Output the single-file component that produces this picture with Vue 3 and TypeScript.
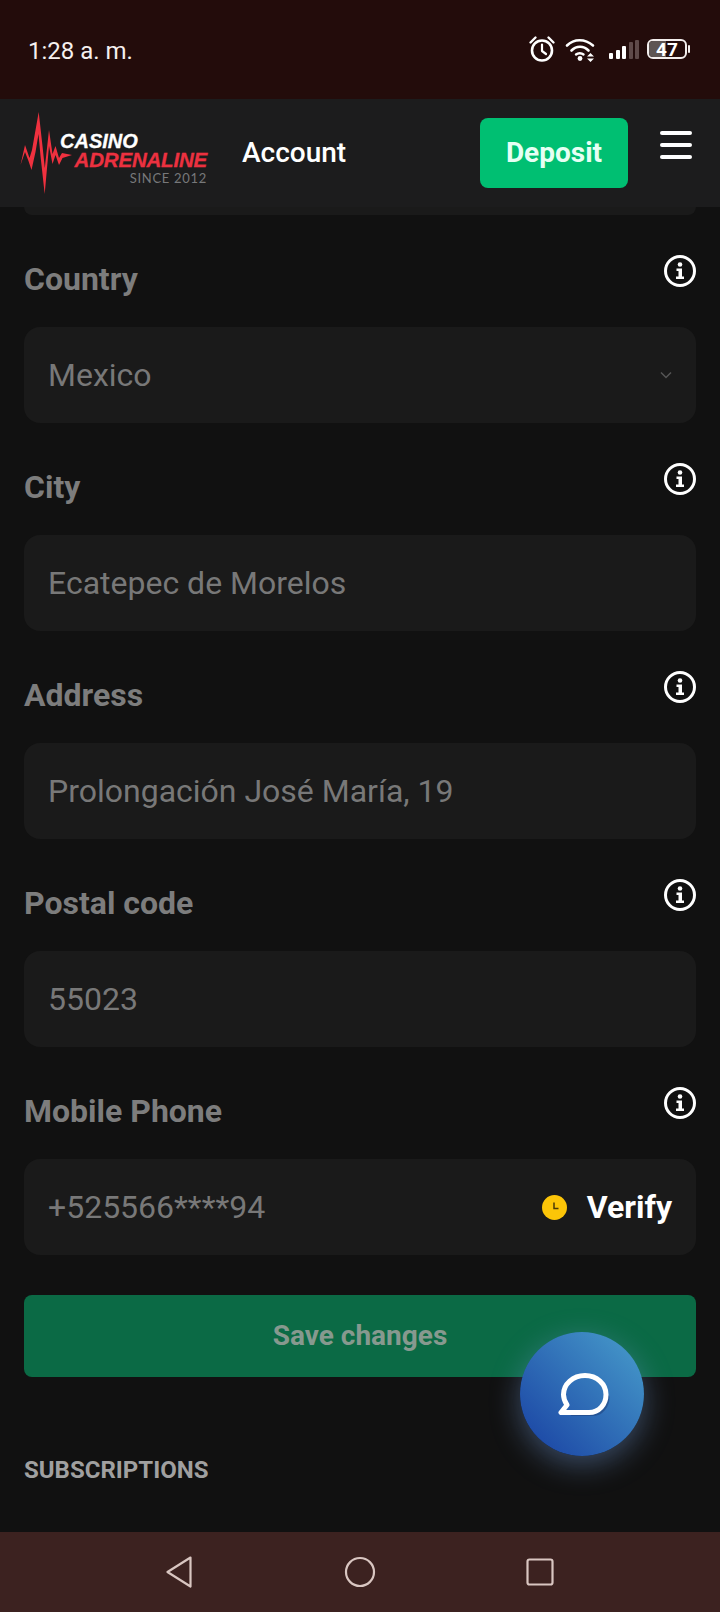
<template>
  <div class="screen">
    <div class="status-bar">
      <span class="time">1:28 a. m.</span>
      <div class="status-icons">
        <svg class="ic-alarm" width="28" height="28" viewBox="0 0 28 28" fill="none" stroke="#fff">
          <circle cx="14" cy="15.5" r="10" stroke-width="2.6" />
          <path d="M14 9.5v6.5l4 3" stroke-width="2.2" stroke-linecap="round" stroke-linejoin="round" />
          <path d="M2.5 7.5 7.5 2.5M25.5 7.5 20.5 2.5" stroke-width="2.4" stroke-linecap="round" />
        </svg>
        <svg class="ic-wifi" width="30" height="26" viewBox="0 0 30 26" fill="none" stroke="#fff">
          <path d="M2 9.5C9 2.5 20 2.5 28 9.5" stroke-width="2.6" stroke-linecap="round" />
          <path d="M6.5 14.5C11.5 9.5 18.5 9.5 23.5 14.5" stroke-width="2.6" stroke-linecap="round" />
          <path d="M11 18.5C13 16.8 16.5 16.8 18.5 18.5" stroke-width="2.4" stroke-linecap="round" />
          <circle cx="15" cy="22.5" r="2.4" fill="#fff" stroke="none" />
          <path d="M22 20.5h7l-3.500-3.500zM22 22.500h7l-3.500 3.500z" fill="#fff" stroke="none" />
        </svg>
        <div class="signal">
          <i v-for="b in bars" :key="b.h" :class="{ dim: b.dim }" :style="{ height: b.h + 'px' }"></i>
        </div>
        <div class="battery">
          <div class="battery-body">
            <div class="battery-fill" :style="{ width: batteryLevel + '%' }"></div>
            <span class="battery-num">{{ batteryLevel }}</span>
          </div>
          <div class="battery-tip"></div>
        </div>
      </div>
    </div>

    <header class="topbar">
      <div class="logo">
        <svg class="logo-pulse" width="60" height="88" viewBox="0 0 60 88" fill="#f0313f">
          <path d="M2.500 57 7 37 11.500 50 14 42 20.700 4 24.500 38 26.800 60 31 22 34.500 46 37.500 38 41 50 44 45 54 47 44.500 50 41 57 37.500 47 34.500 56 31 38 26.700 86 22.500 48 20.500 26 17.500 44 13.500 62 10.500 53 7 44Z" />
        </svg>
        <div class="logo-text">
          <span class="logo-casino">CASINO</span>
          <span class="logo-adrenaline">ADRENALINE</span>
          <span class="logo-since">SINCE 2012</span>
        </div>
      </div>
      <span class="page-title">Account</span>
      <button class="deposit-btn">Deposit</button>
      <div class="burger"><i></i><i></i><i></i></div>
    </header>

    <main class="content">
      <div class="field-stub"></div>
      <div class="form">
        <section v-for="f in fields" :key="f.label" class="group">
          <div class="group-head">
            <label class="group-label">{{ f.label }}</label>
            <svg class="info" width="32" height="32" viewBox="0 0 32 32">
              <circle cx="16" cy="16" r="14.500" fill="none" stroke="#fff" stroke-width="3" />
              <circle cx="16" cy="9.500" r="2.300" fill="#fff" />
              <path d="M12.500 13.500h5.500v8h2v2.500h-8v-2.500h2.500v-5.500h-2z" fill="#fff" />
            </svg>
          </div>
          <div class="input">
            <span class="input-value">{{ f.value }}</span>
            <svg v-if="f.select" class="chev" width="12" height="8" viewBox="0 0 12 8" fill="none" stroke="#555" stroke-width="1.500">
              <path d="M1 1.500 6 6.500 11 1.500" />
            </svg>
            <div v-if="f.verify" class="verify">
              <svg width="25" height="25" viewBox="0 0 25 25">
                <circle cx="12.500" cy="12.500" r="12.500" fill="#fcc508" />
                <path d="M12 7.500v6h4.500" fill="none" stroke="#4a3a06" stroke-width="1.500" />
              </svg>
              <span>Verify</span>
            </div>
          </div>
        </section>
      </div>
      <button class="save-btn">Save changes</button>
      <h3 class="subs-title">SUBSCRIPTIONS</h3>
    </main>

    <button class="chat-fab">
      <svg width="52" height="46" viewBox="0 0 52 46" fill="none">
        <path d="M14 41.500H35C44 41.500 50 33 50 24" stroke="#1d3f7a" stroke-opacity=".55" stroke-width="3" stroke-linecap="round" />
        <path d="M3 39.500H31C41 39.500 48 31.500 48 21.500 48 11 39 2.500 27 2.500 15 2.500 5.500 11 5.500 21.500 5.500 25.500 7 29 9 32Z" stroke="#fff" stroke-width="5" stroke-linejoin="round" />
      </svg>
    </button>

    <nav class="navbar">
      <svg width="28" height="34" viewBox="0 0 28 34" fill="none" stroke="#d9c6c1" stroke-width="2.200" stroke-linejoin="round">
        <path d="M24.500 2.500 1.500 17 24.500 31.500Z" />
      </svg>
      <svg width="32" height="32" viewBox="0 0 32 32" fill="none" stroke="#d9c6c1" stroke-width="2.200">
        <circle cx="16" cy="16" r="14" />
      </svg>
      <svg width="28" height="28" viewBox="0 0 28 28" fill="none" stroke="#d9c6c1" stroke-width="2.200">
        <rect x="1.500" y="1.500" width="25" height="25" rx="2" />
      </svg>
    </nav>
  </div>
</template>

<script setup lang="ts">
interface Field {
  label: string
  value: string
  select?: boolean
  verify?: boolean
}

const fields: Field[] = [
  { label: 'Country', value: 'Mexico', select: true },
  { label: 'City', value: 'Ecatepec de Morelos' },
  { label: 'Address', value: 'Prolongación José María, 19' },
  { label: 'Postal code', value: '55023' },
  { label: 'Mobile Phone', value: '+525566****94', verify: true }
]

const bars = [
  { h: 6, dim: false },
  { h: 9, dim: false },
  { h: 13, dim: false },
  { h: 17, dim: true },
  { h: 19, dim: true }
]

const batteryLevel = 47
</script>

<style>
html,
body {
  margin: 0;
  background: #111111;
}
</style>

<style scoped>
.screen {
  position: relative;
  width: 720px;
  height: 1612px;
  display: flex;
  flex-direction: column;
  overflow: hidden;
  background: #111111;
  font-family: Roboto, "Liberation Sans", sans-serif;
  color: #fff;
}

.status-bar {
  height: 99px;
  flex: none;
  display: flex;
  justify-content: space-between;
  align-items: flex-start;
  box-sizing: border-box;
  padding: 35px 30px 0 28px;
  background: #230c0b;
}

.time {
  margin-top: 1px;
  font-size: 24px;
  line-height: 30px;
  color: #f5f0ef;
}

.status-icons {
  display: flex;
  align-items: center;
  height: 28px;
}

.ic-wifi {
  margin-left: 9px;
}

.signal {
  display: flex;
  align-items: flex-end;
  gap: 2.5px;
  margin-left: 14px;
  height: 19px;
}

.signal i {
  width: 4px;
  background: #fff;
  border-radius: 1px;
}

.signal i.dim {
  background: #5f4a49;
}

.battery {
  display: flex;
  align-items: center;
  margin-left: 8px;
}

.battery-body {
  position: relative;
  width: 40px;
  height: 20px;
  box-sizing: border-box;
  border: 2px solid #f3eeed;
  border-radius: 6px;
  overflow: hidden;
}

.battery-fill {
  height: 100%;
  background: #5e5553;
}

.battery-num {
  position: absolute;
  inset: 0;
  display: flex;
  align-items: center;
  justify-content: center;
  font-size: 19px;
  font-weight: 700;
  color: #fff;
}

.battery-tip {
  width: 2px;
  height: 8px;
  margin-left: 1px;
  background: #f3eeed;
  border-radius: 1px;
}

.topbar {
  height: 108px;
  flex: none;
  display: flex;
  align-items: flex-start;
  position: relative;
  z-index: 2;
  background: #1c1c1d;
}

.logo {
  display: flex;
  margin: 9px 0 0 18px;
}

.logo-pulse {
  flex: none;
}

.logo-text {
  display: flex;
  flex-direction: column;
  align-items: flex-end;
  width: 147px;
  margin: 24px 0 0 -18px;
  font-family: "Liberation Sans", Arial, sans-serif;
}

.logo-casino {
  align-self: flex-start;
  font-size: 20px;
  line-height: 18px;
  font-weight: 700;
  font-style: italic;
  color: #fff;
  -webkit-text-stroke: 0.3px #fff;
}

.logo-adrenaline {
  font-size: 20.500px;
  line-height: 20px;
  font-weight: 700;
  font-style: italic;
  color: #ec3140;
  letter-spacing: -0.2px;
  -webkit-text-stroke: 0.3px #ec3140;
}

.logo-since {
  margin-top: 1px;
  font-size: 13px;
  line-height: 14px;
  font-family: Lato, sans-serif;
  color: #77787a;
  letter-spacing: 0.7px;
}

.page-title {
  margin: 36px 0 0 35px;
  font-size: 28px;
  line-height: 36px;
  font-weight: 500;
}

.deposit-btn {
  width: 148px;
  height: 70px;
  margin: 19px 0 0 auto;
  padding: 0;
  border: 0;
  border-radius: 8px;
  background: #00bf72;
  color: #e6fff4;
  font: 700 28px/36px Roboto, sans-serif;
}

.burger {
  display: flex;
  flex-direction: column;
  gap: 8px;
  width: 32px;
  margin: 32px 28px 0 32px;
}

.burger i {
  height: 4px;
  border-radius: 2px;
  background: #fff;
}

.content {
  flex: 1;
  min-height: 0;
  display: flex;
  flex-direction: column;
  padding: 0 24px;
}

.field-stub {
  height: 8px;
  flex: none;
  background: #1a1a1a;
  border-radius: 0 0 14px 14px;
}

.form {
  display: flex;
  flex-direction: column;
  gap: 40px;
  padding-top: 40px;
}

.group-head {
  height: 72px;
  display: flex;
  justify-content: space-between;
  align-items: flex-start;
}

.group-label {
  margin-top: 5px;
  font-size: 32px;
  line-height: 38px;
  font-weight: 700;
  color: #7d7d7d;
}

.input {
  height: 96px;
  display: flex;
  align-items: center;
  justify-content: space-between;
  box-sizing: border-box;
  padding: 0 24px;
  background: #1a1a1a;
  border-radius: 16px;
}

.input-value {
  font-size: 32px;
  color: #787878;
}

.verify {
  display: flex;
  align-items: center;
  gap: 20px;
  font-size: 32px;
  font-weight: 700;
  color: #fff;
}

.save-btn {
  flex: none;
  height: 82px;
  margin-top: 40px;
  padding: 0;
  border: 0;
  border-radius: 8px;
  background: #0b6a45;
  color: #87998f;
  font: 700 28px/36px Roboto, sans-serif;
}

.subs-title {
  margin: 78px 0 0;
  font-size: 24px;
  line-height: 30px;
  font-weight: 700;
  color: #a0a0a0;
}

.chat-fab {
  position: absolute;
  left: 520px;
  top: 1332px;
  width: 124px;
  height: 124px;
  padding: 4px 0 0 4px;
  display: flex;
  align-items: center;
  justify-content: center;
  border: 0;
  border-radius: 50%;
  background: linear-gradient(45deg, #1f4da8 15%, #4190c6 85%);
  box-shadow: 0 8px 30px rgba(110, 150, 210, 0.45);
}

.navbar {
  height: 80px;
  flex: none;
  display: flex;
  justify-content: center;
  align-items: center;
  background: #3c2220;
}

.navbar svg {
  flex: none;
  margin: 0 75px;
}
</style>
